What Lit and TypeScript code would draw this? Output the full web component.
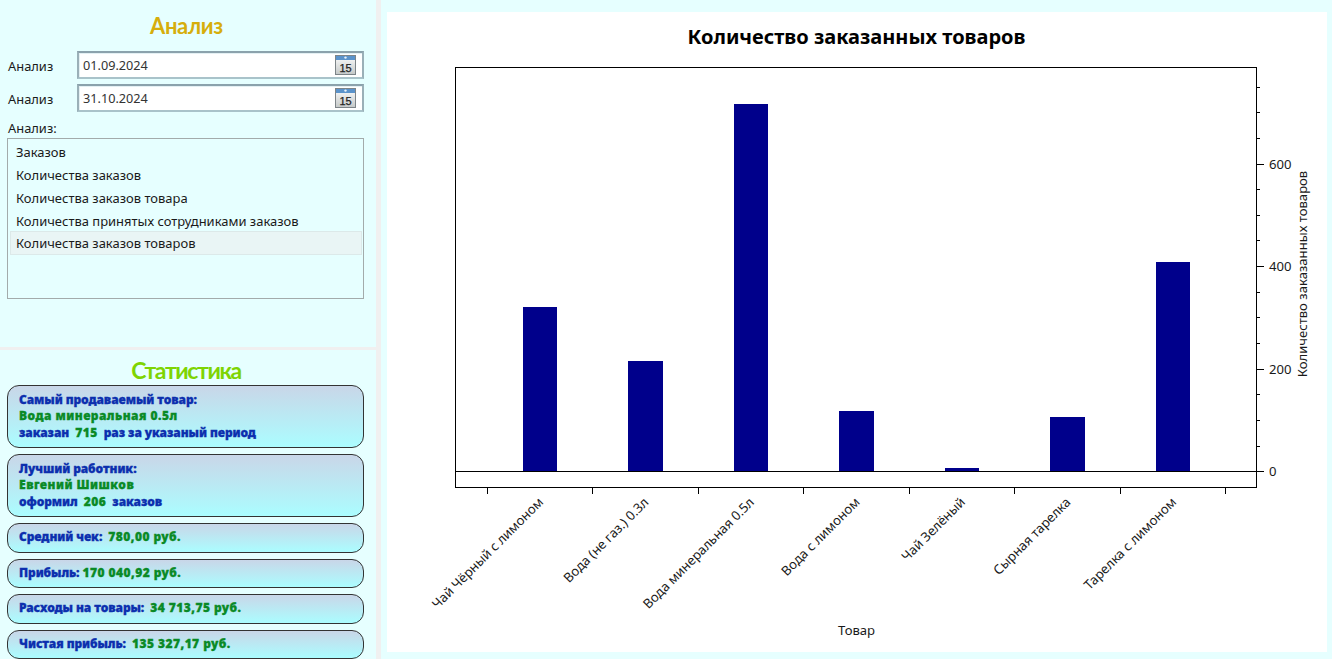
import { LitElement, html, css, svg } from "lit";
import { customElement } from "lit/decorators.js";

const bars = [
  { name: "Чай Чёрный с лимоном", x: 523, w: 34, top: 307 },
  { name: "Вода (не газ.) 0.3л", x: 628, w: 35, top: 361 },
  { name: "Вода минеральная 0.5л", x: 734, w: 34, top: 104 },
  { name: "Вода с лимоном", x: 839, w: 35, top: 411 },
  { name: "Чай Зелёный", x: 945, w: 34, top: 468 },
  { name: "Сырная тарелка", x: 1050, w: 35, top: 417 },
  { name: "Тарелка с лимоном", x: 1156, w: 34, top: 262 },
];
const xTicks = [487.5, 592.5, 698, 803, 909, 1014, 1120, 1225];
const zero = 471.3;
const perUnit = 102.6 / 200;

@customElement("date-box")
class DateBox extends LitElement {
  static properties = { value: {} };
  value = "";
  static styles = css`
    :host { display: block; flex: 1; }
    .box {
      height: 28px; box-sizing: border-box; background: #fff;
      border: 2px solid #9ab0b8; border-top-color: #8ba2ac; border-bottom-color: #a9c3ca;
      box-shadow: inset 1px 1px 0 #e4f0f3;
      display: flex; align-items: center; justify-content: space-between;
      padding: 0 6px 0 4px;
      font: 12.7px "Noto Sans", sans-serif; color: #333;
    }
    svg { display: block; }
    .num { font: 11px "Liberation Sans", sans-serif; fill: #222; stroke: #222; stroke-width: .25; }
  `;
  render() {
    return html`<div class="box"><span>${this.value}</span>
      <svg width="21" height="20" viewBox="0 0 21 20" aria-hidden="true">
        <defs>
          <linearGradient id="g" x1="0" y1="0" x2="0" y2="1"><stop offset="0" stop-color="#fdfdfd"/><stop offset="1" stop-color="#c4c8c8"/></linearGradient>
        </defs>
        <rect x=".5" y=".5" width="20" height="19" fill="url(#g)" stroke="#7d8488"/>
        <rect x="1" y="1" width="19" height="4" fill="#5b93cb"/>
        <circle cx="10.5" cy="2.6" r="1.2" fill="#e8f2fa"/>
        <text class="num" x="10.5" y="16.5" text-anchor="middle">15</text>
      </svg></div>`;
  }
}

@customElement("app-root")
class AppRoot extends LitElement {
  static styles = css`
    :host {
      display: grid; grid-template-columns: 376px 5px 1fr;
      width: 100%; height: 100vh; overflow: hidden;
      background: #e6ffff; font-family: "Noto Sans", sans-serif; color: #1a1a1a;
    }
    .side { display: grid; grid-template-rows: 347px 3px 1fr; min-height: 0; }
    .vsplit { background: #f0f0f0; }
    .hsplit { background: #f0f0f0; }
    .panel { padding: 0 12px 0 7px; min-width: 0; overflow: hidden; }
    h2 {
      margin: 0; text-align: center; font: bold 22px/26px Lato, sans-serif;
    }
    .top h2 { color: #d6ae0c; padding-top: 13px; height: 38px; box-sizing: content-box; margin-left: 2px; letter-spacing: -0.3px; }
    .row { display: flex; align-items: center; height: 28px; margin-bottom: 5px; }
    .row label { width: 70px; padding-left: 1px; font-size: 12.9px; padding-top: 2px; box-sizing: border-box; }
    .cap { font-size: 12.9px; line-height: 18px; padding-left: 1px; margin-top: 7px; margin-bottom: 1px; }
    .list {
      height: 161px; box-sizing: border-box; border: 1px solid #a3abab;
      padding: 2px 1px; display: flex; flex-direction: column;
    }
    .item {
      height: 23px; box-sizing: border-box; padding-left: 6px; border: 1px solid transparent;
      font-size: 12.97px; line-height: 21px; white-space: nowrap;
    }
    .item.sel { background: #e9f5f5; border-color: #dce9e9; margin: -2px 0 0 1px; height: 24px; padding-left: 5px; line-height: 23px; }
    .bottom { display: flex; flex-direction: column; }
    .bottom h2 { color: #7ed402; font-size: 23px; line-height: 26px; padding-top: 7px; height: 28px; margin-left: 1px; letter-spacing: -1.4px; }
    .cards { display: flex; flex-direction: column; gap: 6px; margin-top: 2px; }
    .card {
      box-sizing: border-box; border: 1.5px solid #333; border-radius: 12px;
      background: linear-gradient(#c9d6e8, #abfdff);
      padding: 0 11px; font: 900 12px/16.5px "Noto Sans", sans-serif; color: #0c2fae;
      letter-spacing: -0.08px; -webkit-text-stroke: 0.3px currentColor;
      display: flex; flex-direction: column; justify-content: center;
    }
    .card.tall { height: 63px; }
    .card.short { height: 29.5px; padding-bottom: 1px; }
    .card b { color: #0a8a26; font-weight: 900; letter-spacing: 0.45px; }
    .chartwrap { padding: 12px 5px 7px 6px; min-width: 0; min-height: 0; }
    .chart { width: 100%; height: 100%; background: #fff; }
    svg.plot { display: block; width: 100%; height: 100%; }
    .title { font: bold 20px "Noto Sans", sans-serif; fill: #000; }
    .lbl { font: 13.1px "Noto Sans", sans-serif; fill: #1a1a1a; }
    .ax { stroke: #000; stroke-width: 1; fill: none; shape-rendering: crispEdges; }
  `;

  private plot() {
    const major = [0, 200, 400, 600];
    const ticks: number[] = [];
    for (let v = 0; v <= 750; v += 50) ticks.push(v);
    return svg`
      <text class="title" x="856.5" y="44" text-anchor="middle">Количество заказанных товаров</text>
      ${bars.map((b) => svg`<rect x=${b.x} y=${b.top} width=${b.w} height=${471 - b.top} fill="#00008b"/>`)}
      <rect class="ax" x="455.5" y="67.5" width="800.5" height="419.5"/>
      <line class="ax" x1="455.5" x2="1256" y1="471" y2="471"/>
      ${xTicks.map((x) => svg`<line class="ax" x1=${x} x2=${x} y1="487" y2="494"/>`)}
      ${ticks.map((v) => {
        const y = Math.round(zero - v * perUnit);
        const len = major.includes(v) ? 8 : 4;
        return svg`<line class="ax" x1="1256" x2=${1256 + len} y1=${y} y2=${y}/>`;
      })}
      ${major.map((v) => svg`<text class="lbl" x="1269" y=${zero - v * perUnit + 5}>${v}</text>`)}
      ${bars.map((b) => svg`<text class="lbl" text-anchor="end" transform=${`translate(${b.x + b.w / 2 + 4} 503) rotate(-45)`}>${b.name}</text>`)}
      <text class="lbl" x="856.5" y="635" text-anchor="middle">Товар</text>
      <text class="lbl" text-anchor="middle" transform="translate(1307 274) rotate(-90)">Количество заказанных товаров</text>
    `;
  }

  render() {
    return html`
      <div class="side">
        <section class="panel top">
          <h2>Анализ</h2>
          <div class="row"><label>Анализ</label><date-box value="01.09.2024"></date-box></div>
          <div class="row"><label>Анализ</label><date-box value="31.10.2024"></date-box></div>
          <div class="cap">Анализ:</div>
          <div class="list">
            <div class="item">Заказов</div>
            <div class="item">Количества заказов</div>
            <div class="item">Количества заказов товара</div>
            <div class="item">Количества принятых сотрудниками заказов</div>
            <div class="item sel">Количества заказов товаров</div>
          </div>
        </section>
        <div class="hsplit"></div>
        <section class="panel bottom">
          <h2>Статистика</h2>
          <div class="cards">
            <div class="card tall">
              <div>Самый продаваемый товар:</div>
              <div><b>Вода минеральная 0.5л</b></div>
              <div>заказан&nbsp; <b>715</b>&nbsp; раз за указаный период</div>
            </div>
            <div class="card tall">
              <div>Лучший работник:</div>
              <div><b>Евгений Шишков</b></div>
              <div>оформил&nbsp; <b>206</b>&nbsp; заказов</div>
            </div>
            <div class="card short"><div>Средний чек:&nbsp; <b>780,00 руб.</b></div></div>
            <div class="card short"><div>Прибыль: <b>170 040,92 руб.</b></div></div>
            <div class="card short"><div>Расходы на товары:&nbsp; <b>34 713,75 руб.</b></div></div>
            <div class="card short"><div>Чистая прибыль:&nbsp; <b>135 327,17 руб.</b></div></div>
          </div>
        </section>
      </div>
      <div class="vsplit"></div>
      <div class="chartwrap">
        <div class="chart">
          <svg class="plot" viewBox="387 12 940 640" preserveAspectRatio="xMinYMin">${this.plot()}</svg>
        </div>
      </div>
    `;
  }
}
